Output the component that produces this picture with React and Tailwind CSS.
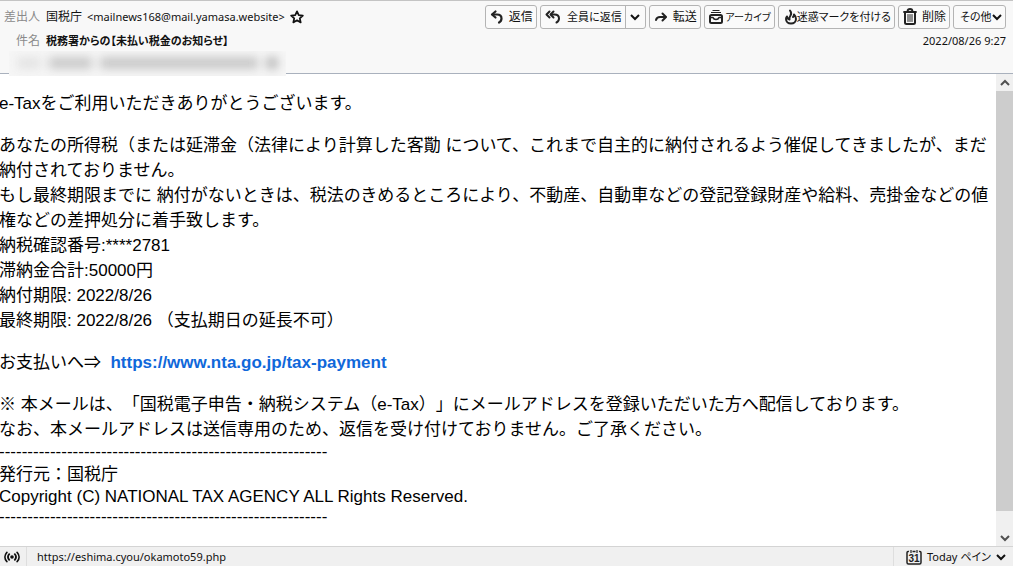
import React from 'react';

const ReplyIcon = () => (
  <svg viewBox="0 0 16 16" className="w-4 h-4 shrink-0" fill="none" stroke="#222" strokeWidth="2.200" strokeLinecap="round" strokeLinejoin="round">
    <path d="M6.500 2.500L3 5.500l3.500 3" />
    <path d="M3.500 5.500H8c3 0 4.500 1.500 4.500 4 0 1.800-1 3.200-2.500 4" />
  </svg>
);

const ReplyAllIcon = () => (
  <svg viewBox="0 0 16 16" className="w-4 h-4 shrink-0" fill="none" stroke="#222" strokeWidth="2" strokeLinecap="round" strokeLinejoin="round">
    <path d="M4.500 2.500L1.500 5.500l3 3" />
    <path d="M8.500 2.500L5.500 5.500l3 3" />
    <path d="M6 5.500h3.500c3 0 4.500 1.500 4.500 4 0 1.800-1 3.200-2.500 4" />
  </svg>
);

const ForwardIcon = () => (
  <svg viewBox="0 0 16 16" className="w-4 h-4 shrink-0" fill="none" stroke="#222" strokeWidth="2" strokeLinecap="round" strokeLinejoin="round">
    <path d="M9.500 4.500L13 8l-3.500 3.500" />
    <path d="M12.500 8H7c-2 0-3.500 1-4 3" />
  </svg>
);

const ArchiveIcon = () => (
  <svg viewBox="1 0 14 16" className="w-[14px] h-4 shrink-0" fill="none" stroke="#222" strokeLinejoin="round">
    <path d="M4.500 1.500h7M3 3.500h10" strokeWidth="1" />
    <rect x="2" y="6" width="12" height="8" rx="1.500" strokeWidth="2" />
    <path d="M2 8.500h3c.5 1.500 1.500 2 3 2s2.500-.5 3-2h3" strokeWidth="1.500" />
  </svg>
);

const JunkIcon = () => (
  <svg viewBox="2 0 12 16" className="w-3 h-4 shrink-0" fill="none" stroke="#222" strokeWidth="2" strokeLinejoin="round" strokeLinecap="round">
    <path d="M7 1.500c1.500 2 1.500 3.500.5 5C6.500 8 6 9 6.500 10.500 5 10 4 8.500 4 7.500 3 8.500 3 9.500 3 10c0 2.500 2 4.500 5 4.500s5-2 5-4.500c0-2-1-3.500-2-4.500 0 1.500-.5 2-1 2.500" />
  </svg>
);

const TrashIcon = () => (
  <svg viewBox="0 0 16 18" className="w-4 h-[18px] shrink-0" fill="none" stroke="#222" strokeLinejoin="round" strokeLinecap="round">
    <path d="M2 4h12M5.500 3.500c0-2 1-2.500 2.500-2.500s2.500.5 2.500 2.500" strokeWidth="1.800" />
    <path d="M3 5v9.500c0 1 .5 1.500 1.500 1.500h7c1 0 1.500-.5 1.500-1.500V5" strokeWidth="2" />
    <path d="M6 6.500v7M8 6.500v7M10 6.500v7" strokeWidth="1" />
  </svg>
);

const StarIcon = () => (
  <svg viewBox="0 0 16 16" className="w-[14px] h-[14px] shrink-0" fill="none" stroke="#111" strokeWidth="2" strokeLinejoin="round">
    <path d="M8 1.500l2 4.300 4.700.5-3.500 3.200 1 4.700L8 11.800l-4.200 2.400 1-4.700L1.300 6.300 6 5.800z" />
  </svg>
);

const Chevron = ({ up = false, color = '#111' }) => (
  <svg viewBox="0 0 10 10" className="w-[10px] h-[10px] shrink-0" fill="none" stroke={color} strokeWidth="2">
    <path d={up ? 'M1 7l4-4 4 4' : 'M1 3l4 4 4-4'} />
  </svg>
);

const SignalIcon = () => (
  <svg viewBox="0 0 16 12" className="w-4 h-3" fill="none" stroke="#111" strokeWidth="1.800" strokeLinecap="round">
    <circle cx="8" cy="6" r="1.800" fill="#111" stroke="none" />
    <path d="M5.200 3.200c-1.400 1.600-1.400 4 0 5.600M10.800 3.200c1.400 1.600 1.400 4 0 5.600M2.800 1.500c-2.400 2.600-2.400 6.400 0 9M13.200 1.500c2.400 2.600 2.400 6.400 0 9" />
  </svg>
);

const CalendarIcon = () => (
  <svg viewBox="0 0 16 16" className="w-4 h-4" fill="none" stroke="#222">
    <path d="M3 2.500A1.500 1.500 0 0 0 1 4v9.500A1.500 1.500 0 0 0 2.500 15h11a1.500 1.500 0 0 0 1.500-1.500V4a1.500 1.500 0 0 0-2-1.500M6.500 2.500h3" strokeWidth="1.500" />
    <path d="M5 1v3M11 1v3" strokeWidth="1.200" />
    <text x="8" y="12.500" textAnchor="middle" fontSize="10" fontWeight="bold" fontFamily="Liberation Sans, sans-serif" fill="#222" stroke="none">31</text>
  </svg>
);

const buttonClass = 'h-6 flex items-center justify-between whitespace-nowrap rounded-[3px] border border-[#b4b4b4] bg-[#fafafa]';

const actions = [
  { label: '転送', icon: <ForwardIcon />, size: 'min-w-[52px] px-[3px] text-[12px]' },
  { label: 'アーカイブ', icon: <ArchiveIcon />, size: 'min-w-[71px] pl-1 pr-[3px] text-[10px]' },
  { label: '迷惑マークを付ける', icon: <JunkIcon />, size: 'min-w-[117px] pl-[6px] pr-[3px]' },
  { label: '削除', icon: <TrashIcon />, size: 'min-w-[52px] px-[3px] text-[12px]' },
  { label: 'その他', icon: null, size: 'min-w-[53px] pl-[6px] pr-[3px]' }
];

const rule = '-'.repeat(58);

const Header = () => (
  <header className="relative h-[73px] shrink-0 flex justify-between bg-[#f8f8f8] border-b border-[#a9b1bd] pr-[7px]">
    <dl className="grid grid-cols-[40px_auto] auto-rows-[24px] content-start items-center gap-x-[6px] pt-1 whitespace-nowrap">
      <dt className="text-right text-[12px] text-[#8a8a8a]">差出人</dt>
      <dd className="flex items-center gap-[5px]">
        <span className="text-[12px]">国税庁</span>
        <span>&lt;mailnews168@mail.yamasa.website&gt;</span>
        <button type="button" aria-label="スター"><StarIcon /></button>
      </dd>
      <dt className="text-right text-[12px] text-[#8a8a8a]">件名</dt>
      <dd className="font-bold">税務署からの【未払い税金のお知らせ】</dd>
    </dl>

    {/* Redacted recipient line */}
    <div className="absolute left-[9px] top-[50px] w-[277px] h-[25px] bg-[#f6f6f6] overflow-hidden">
      <div className="flex gap-2 px-2 pt-[6px] blur-[5px]">
        <span className="w-6 h-3 bg-[#e4e4e4]" />
        <span className="w-11 h-3 bg-[#cacaca]" />
        <span className="w-40 h-3 bg-[#c8c8c8]" />
        <span className="w-3 h-3 bg-[#bcbcbc]" />
      </div>
    </div>

    <div className="pt-1">
      <div className="flex justify-end gap-[3px]">
        <button type="button" className={`${buttonClass} min-w-[52px] px-[3px] text-[12px]`}>
          <ReplyIcon />
          <span>返信</span>
        </button>
        <div className={`${buttonClass} min-w-[106px]`}>
          <button type="button" className="h-full flex flex-1 items-center justify-between pl-1 pr-[3px]">
            <ReplyAllIcon />
            <span>全員に返信</span>
          </button>
          <button type="button" aria-label="返信メニュー" className="w-5 h-full flex items-center justify-center border-l border-[#b4b4b4]">
            <Chevron />
          </button>
        </div>
        {actions.map((action) => (
          <button key={action.label} type="button" className={`${buttonClass} ${action.size}`}>
            {action.icon}
            <span>{action.label}</span>
            {!action.icon && <Chevron />}
          </button>
        ))}
      </div>
      <time className="block text-right leading-6">2022/08/26 9:27</time>
    </div>
  </header>
);

const Message = () => (
  <article className="flex-1 min-w-0 pt-[17px] space-y-[17px] -ml-px font-['Liberation_Sans','Noto_Sans_CJK_JP',sans-serif] [font-feature-settings:normal] [text-spacing-trim:space-all] text-[17px] leading-[25px] text-black">
    <p>e-Taxをご利用いただきありがとうございます。</p>
    <p>
      あなたの所得税（または延滞金（法律により計算した客勩 について、これまで自主的に納付されるよう催促してきましたが、まだ納付されておりません。<br />
      もし最終期限までに 納付がないときは、税法のきめるところにより、不動産、自動車などの登記登録財産や給料、売掛金などの値権などの差押処分に着手致します。<br />
      納税確認番号:****2781<br />
      滞納金合計:50000円<br />
      納付期限: 2022/8/26<br />
      最終期限: 2022/8/26 （支払期日の延長不可）
    </p>
    <p>
      お支払いへ⇒&nbsp; <a href="#" className="font-bold text-[#1068da]">https://www.nta.go.jp/tax-payment</a>
    </p>
    <div>
      <p>
        ※ 本メールは、「国税電子申告・納税システム（e-Tax）」にメールアドレスを登録いただいた方へ配信しております。<br />
        なお、本メールアドレスは送信専用のため、返信を受け付けておりません。ご了承ください。
      </p>
      <p className="leading-5">{rule}</p>
      <p>発行元：国税庁</p>
      <p className="leading-5">Copyright (C) NATIONAL TAX AGENCY ALL Rights Reserved.</p>
      <p className="leading-5">{rule}</p>
    </div>
  </article>
);

const Scrollbar = () => (
  <div className="w-[17px] shrink-0 flex flex-col bg-[#f0f0f0]">
    <button type="button" aria-label="上へ" className="h-[17px] flex items-center justify-center"><Chevron up color="#505050" /></button>
    <div className="flex-1 mb-[18px] bg-[#cdcdcd]" />
    <button type="button" aria-label="下へ" className="h-[17px] flex items-center justify-center"><Chevron color="#505050" /></button>
  </div>
);

const StatusBar = () => (
  <footer className="h-5 shrink-0 flex items-center bg-[#f0f0f0] border-t border-[#d4d4d4]">
    <div className="w-[27px] h-full flex items-center pl-1 border-r border-[#dedede]"><SignalIcon /></div>
    <span className="flex-1 pl-[10px]">https://eshima.cyou/okamoto59.php</span>
    <button type="button" className="h-full flex items-center gap-[5px] pl-3 pr-[7px] border-l border-[#dedede] whitespace-nowrap">
      <CalendarIcon />
      <span>Today ペイン</span>
      <Chevron />
    </button>
  </footer>
);

const App = () => (
  <div className="h-screen flex flex-col overflow-hidden bg-white border-t border-[#c4c4c4] font-['Noto_Sans','Noto_Sans_CJK_JP',sans-serif] [font-feature-settings:'palt'] text-[11px] leading-4 text-[#111]">
    <Header />
    <main className="flex-1 min-h-0 flex">
      <Message />
      <Scrollbar />
    </main>
    <StatusBar />
  </div>
);

export default App;
